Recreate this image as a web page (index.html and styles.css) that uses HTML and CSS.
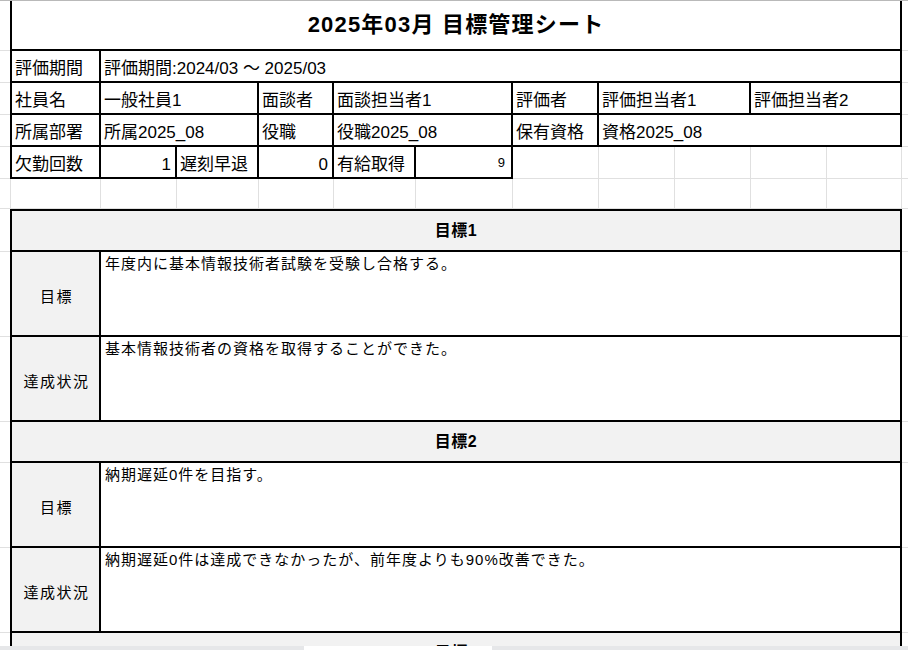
FILE: index.html
```
<!DOCTYPE html>
<html lang="ja">
<head>
<meta charset="utf-8">
<title>2025年03月 目標管理シート</title>
<link rel="stylesheet" href="styles.css">
</head>
<body>
<div class="topline"></div>
<div class="sheet">
  <div class="m"></div><div class="c first title s11">2025年03月 目標管理シート</div><div class="m"></div>

  <div class="m"></div><div class="c first">評価期間</div><div class="c s10">評価期間:2024/03 〜 2025/03</div><div class="m"></div>

  <div class="m"></div><div class="c first">社員名</div><div class="c s2">一般社員1</div><div class="c">面談者</div><div class="c s2">面談担当者1</div><div class="c">評価者</div><div class="c s2">評価担当者1</div><div class="c s2">評価担当者2</div><div class="m"></div>

  <div class="m"></div><div class="c first">所属部署</div><div class="c s2">所属2025_08</div><div class="c">役職</div><div class="c s2">役職2025_08</div><div class="c">保有資格</div><div class="c s4">資格2025_08</div><div class="m"></div>

  <div class="m"></div><div class="c first">欠勤回数</div><div class="c num">1</div><div class="c">遅刻早退</div><div class="c num">0</div><div class="c">有給取得</div><div class="c num small">9</div><div class="g"></div><div class="g"></div><div class="g"></div><div class="g"></div><div class="g"></div><div class="m"></div>

  <div class="m"></div><div class="g gfirst"></div><div class="g"></div><div class="g"></div><div class="g"></div><div class="g"></div><div class="g"></div><div class="g"></div><div class="g"></div><div class="g"></div><div class="g"></div><div class="g"></div><div class="m"></div>

  <div class="m"></div><div class="c first gh top s11">目標1</div><div class="m"></div>
  <div class="m"></div><div class="c first gl">目標</div><div class="c gc s10">年度内に基本情報技術者試験を受験し合格する。</div><div class="m"></div>
  <div class="m"></div><div class="c first gl">達成状況</div><div class="c gc s10">基本情報技術者の資格を取得することができた。</div><div class="m"></div>

  <div class="m"></div><div class="c first gh s11">目標2</div><div class="m"></div>
  <div class="m"></div><div class="c first gl">目標</div><div class="c gc s10">納期遅延0件を目指す。</div><div class="m"></div>
  <div class="m"></div><div class="c first gl">達成状況</div><div class="c gc s10">納期遅延0件は達成できなかったが、前年度よりも90%改善できた。</div><div class="m"></div>

  <div class="m"></div><div class="c first gh s11">目標3</div><div class="m"></div>
</div>
<div class="hscroll"><div class="thumb"></div></div>
</body>
</html>
```
FILE: styles.css
```
* { box-sizing: border-box; }
html, body { margin: 0; padding: 0; background: #fff; overflow: hidden; }
body {
  font-family: "Liberation Sans", "Noto Sans CJK JP", sans-serif;
  color: #000;
}
.topline { height: 1px; background: #b9b9b9; }
.sheet {
  display: grid;
  grid-template-columns: 10px 91px 76px 82px 75px 82px 97px 86px 76px 76px 76px 75px 6px;
  grid-template-rows: 50px 32px 32px 32px 32px 30px 43px 85px 85px 41px 85px 85px 41px;
}
.m { border-bottom: 1px solid #e0e0e0; }
.c {
  border-right: 2px solid #000;
  border-bottom: 2px solid #000;
  font-size: 17px;
  line-height: 20px;
  padding: 0 3px 2px 3px;
  display: flex;
  align-items: flex-end;
  white-space: nowrap;
  overflow: hidden;
}
.first { border-left: 2px solid #000; }
.s2 { grid-column: span 2; }
.s4 { grid-column: span 4; }
.s10 { grid-column: span 10; }
.s11 { grid-column: span 11; }
.title {
  justify-content: center;
  align-items: center;
  font-weight: bold;
  font-size: 22px;
  letter-spacing: 1.2px;
  padding-top: 2px;
}
.num { justify-content: flex-end; padding-right: 4px; }
.small { font-size: 13px; padding-right: 6px; padding-bottom: 4px; }
.g { border-right: 1px solid #e0e0e0; border-bottom: 1px solid #e0e0e0; }
.gfirst { border-left: 1px solid #e0e0e0; }
.gh {
  background: #f2f2f2;
  justify-content: center;
  align-items: center;
  font-weight: bold;
  font-size: 16px;
  letter-spacing: 0.5px;
  padding: 0;
}
.top { border-top: 2px solid #000; }
.gl {
  background: #f2f2f2;
  justify-content: center;
  align-items: center;
  font-size: 15px;
  letter-spacing: 1.5px;
  padding: 6px 0 0 2px;
}
.gc {
  align-items: flex-start;
  font-size: 15px;
  letter-spacing: 1px;
  padding: 2px 4px;
  background: #fff;
}
.hscroll {
  position: fixed;
  left: 0;
  right: 0;
  bottom: 0;
  height: 4px;
  background: #e6e7e9;
}
.thumb {
  margin-left: 304px;
  width: 188px;
  height: 4px;
  background: #fff;
}
```
